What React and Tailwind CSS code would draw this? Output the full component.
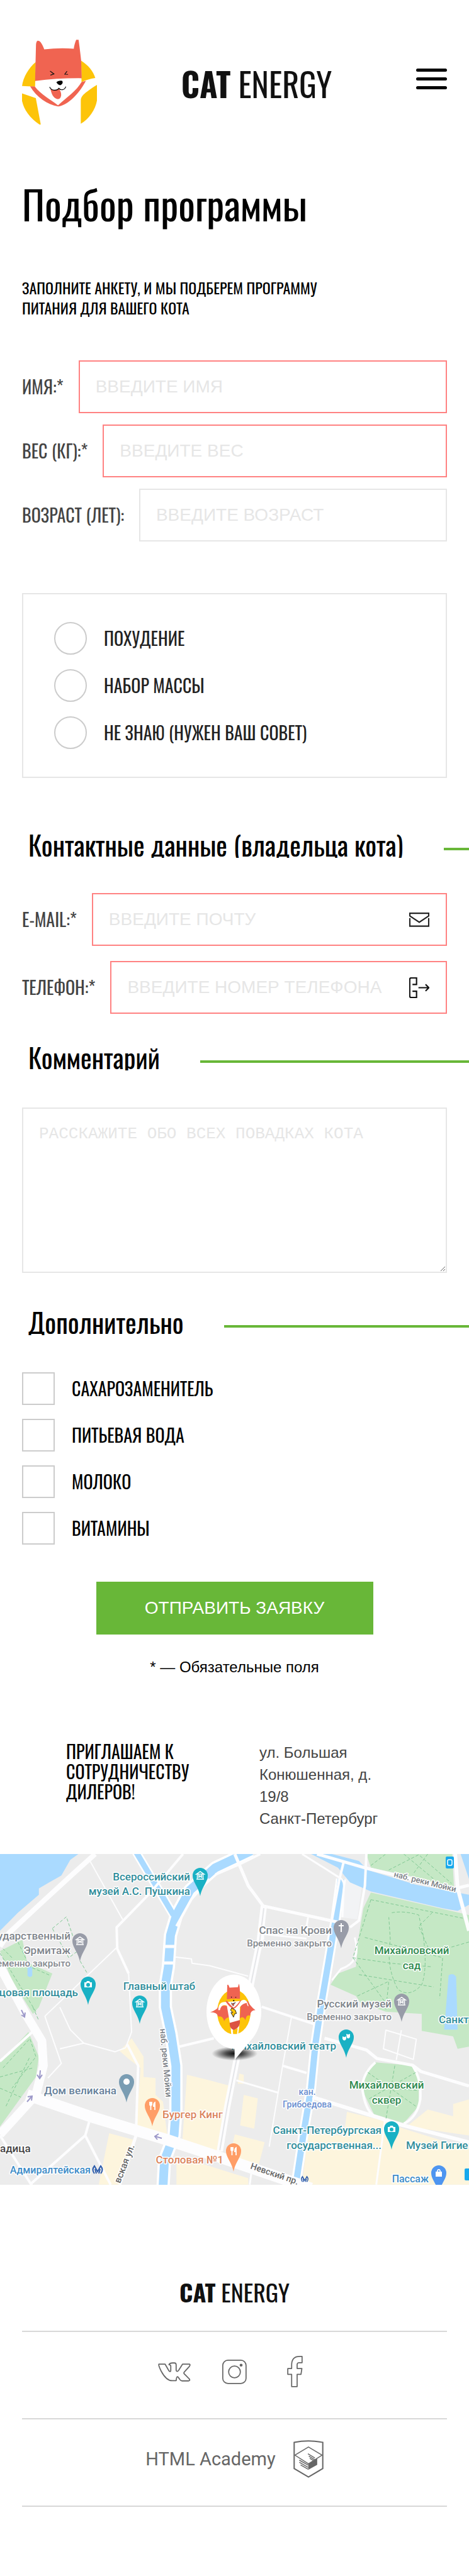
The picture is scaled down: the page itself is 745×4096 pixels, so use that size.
const OSWALD = "font-['Oswald','Roboto_Condensed',sans-serif]";
const ARIAL = "font-['Liberation_Sans',Arial,sans-serif]";

function CatLogo() {
  return (
    <svg viewBox="66 66 408 462" className="h-[135px] w-[119px] shrink-0" aria-label="Кот" role="img">
      <g fill="#fdc409">
        <path d="M141 187C102 220 72 270 66 318L137 322Z" />
        <path d="M388 180C425 203 455 238 465 275Q425 280 390 298Z" />
        <path d="M66 359L141 384L168 528H161C108 495 76 446 66 400Z" />
        <path d="M474 312V398C466 446 430 500 386 524V396C386 378 400 363 420 349C440 333 460 320 474 312Z" />
      </g>
      <path
        fill="#f06451"
        d="M137 291L142 95C144 66 155 68 167 79C177 92 183 108 187 119Q265 109 348 115C350 95 357 75 361 66H374C380 110 385 150 388 180L391 276Q260 275 137 291Z"
      />
      <path fill="#f06451" d="M110 320L135 321C170 365 225 395 262 424C310 380 362 345 390 297L414 290C365 380 305 425 262 430C205 420 145 380 110 320Z" />
      <path fill="#f06451" d="M221 334Q245 350 267 333C277 348 280 358 279 370C275 392 262 391 255 389C235 381 226 362 221 334Z" />
      <path d="M253 299Q262 288 284 290C292 299 284 312 272 314Q258 309 253 299Z" />
      <path fill="none" stroke="#000" strokeWidth="4" strokeLinecap="round" d="M217 325C226 344 256 347 267 331C275 344 298 341 304 323" />
      <path fill="none" stroke="#111" strokeWidth="4" strokeLinecap="round" d="M220 238L240 253L222 259M310 239L299 254L315 255" />
    </svg>
  );
}

function Brand({ size }) {
  return (
    <a href="#" className={`${OSWALD} whitespace-nowrap text-[#111] ${size}`}>
      <b className="font-bold">CAT</b> <span className="font-normal">ENERGY</span>
    </a>
  );
}

function MailIcon() {
  return (
    <svg viewBox="0 0 36 26" className="h-[23px] w-[32px]" fill="none" stroke="#222" strokeWidth="2.5">
      <path d="M1 10V24.5H35V10M1 6V1.2H35V6L18 17.5Z" />
    </svg>
  );
}

function PhoneIcon() {
  return (
    <svg viewBox="0 0 37 38" className="h-[33px] w-[32px]" fill="none" stroke="#111" strokeWidth="2.5">
      <path d="M6 13H13.5V1H3.5Q1 1 1 4V34Q1 37 3.5 37H13.5V25.500H6" />
      <path d="M17 19H35M30 13L36 19L30 25" />
    </svg>
  );
}

function Field({ id, label, placeholder, required, type = "text", icon }) {
  return (
    <div className="flex items-center gap-[24px]">
      <label htmlFor={id} className={`${OSWALD} shrink-0 text-[28px] leading-[40px] font-normal text-[#444]`}>
        {label}
      </label>
      <div className="relative min-w-0 flex-1">
        <input
          id={id}
          type={type}
          placeholder={placeholder}
          className={`${ARIAL} block h-[84px] w-full border-2 bg-white px-[25px] text-[28px] text-[#222] outline-none placeholder:text-[#e6e6e6] placeholder:opacity-100 ${
            required ? "border-[#ff8282]" : "border-[#e6e6e6]"
          }`}
        />
        {icon && <span className="pointer-events-none absolute inset-y-0 right-[28px] flex items-center">{icon}</span>}
      </div>
    </div>
  );
}

function SectionTitle({ children, className }) {
  return (
    <div className={`flex gap-[64px] overflow-hidden pl-[45px] ${className}`}>
      <h2 className={`${OSWALD} h-[42px] shrink-0 overflow-hidden text-[42px] leading-[42px] font-normal text-black`}>{children}</h2>
      <span className="mt-[26px] h-[4px] flex-1 bg-[#68b738]" />
    </div>
  );
}

const water = "#aadaff";

const roads = [
  [8, "M318 59L250 140L150 262L30 410L0 470"],
  [14, "M0 560L90 780L140 890L145 1000L120 1130L0 1305"],
  [18, "M90 1130L300 1225L560 1330L720 1400L1040 1545"],
  [5, "M785 59L830 200L880 290L1130 362"],
  [4, "M1225 59L1220 200L1200 355L1170 385"],
  [3, "M1010 59L1130 160Q1150 170 1150 200L1145 340"],
  [4, "M1150 90L1135 170L1110 350"],
  [2, "M300 88L410 350"],
  [4, "M612 59L500 235L390 385L392 480L430 590"],
  [2, "M430 590L440 850L420 920L385 938L280 900L235 840L200 740M280 900L200 925M150 780L205 990L160 1055"],
  [2, "M390 475L150 780"],
  [4, "M600 915L715 878"],
  [4, "M875 738L970 780L1050 815"],
  [2, "M975 780L945 1000L900 1360"],
  [4, "M945 1000L1025 1032"],
  [5, "M1085 878L1225 930L1260 968L1380 998L1408 1026L1568 1090"],
  [6, "M1045 1140L1235 1218L1340 1262L1568 1340"],
  [6, "M1522 59L1530 210L1568 400"],
  [5, "M1060 59L1225 122L1515 215L1568 198"],
  [4, "M0 980L112 845"],
  [4, "M0 1310L110 1540M100 1529L285 1310L298 1250M285 1310L370 1529"],
  [5, "M455 1310L400 1529"],
  [4, "M425 905L462 1000L455 1285"],
  [2, "M585 517L640 525L642 545L700 555L830 602"],
  [3, "M1287 1240L1258 1529"],
  [3, "M790 1065L930 1120"],
  [3, "M840 1480L835 1529"],
  [2, "M1290 842L1392 882L1382 972L1282 925ZM1342 842L1325 975"],
  [3, "M1186 430Q1210 540 1140 570L1110 620"],
  [3, "M880 390L880 440M1030 340L1020 420M880 415L1025 435"],
  [4, "M720 150L800 105L870 59"],
  [4, "M700 170L640 260L590 380"],
  [4, "M1255 985Q1200 1050 1215 1130Q1225 1200 1250 1222M1380 1000Q1410 1060 1405 1150Q1395 1230 1350 1258"],
];

const paths = [
  "M1240 262L1550 345M1240 262L1180 520L1310 545L1440 560M1310 320Q1350 310 1400 330L1415 420Q1430 570 1410 640Q1370 700 1330 660Q1290 560 1305 440L1300 340M1220 430L1480 520L1470 700M1200 595L1450 650M1195 690L1300 625L1290 750M1568 450L1440 500L1400 380L1445 320M1180 520L1300 740",
  "M1240 110L1290 59M1300 130L1400 62L1510 190M1350 59L1450 170M1430 59L1380 150",
  "M60 450L100 560L170 600M0 500L120 760M40 520L10 480M175 390L222 338L260 490L230 520Z",
  "M10 1010L100 880L120 960L40 1100M0 1050L110 1010M20 1180L100 960M0 1100L70 1140",
  "M1230 1030L1390 1180M1320 1000L1290 1240M1390 1030L1230 1150M1215 1090L1400 1110",
  "M268 535L292 590M110 740L130 800",
];

const labels = [
  ["Всероссийский", 302, 42, "end", "teal"],
  ["музей А.С. Пушкина", 302, 65, "end", "teal"],
  ["ударственный", 112, 136, "end", "grey"],
  ["Эрмитаж", 112, 159, "end", "grey"],
  ["ременно закрыто", 112, 179, "end", "small"],
  ["цовая площадь", 124, 226, "end", "teal"],
  ["Главный штаб", 253, 216, "middle", "teal"],
  ["Дом великана", 185, 382, "end", "slate"],
  ["Бургер Кинг", 258, 420, "start", "orange"],
  ["Столовая №1", 355, 492, "end", "orange"],
  ["адица", 0, 474, "start", "dark"],
  ["Адмиралтейская", 144, 508, "end", "blue"],
  ["Спас на Крови", 527, 127, "end", "grey"],
  ["Временно закрыто", 527, 147, "end", "small"],
  ["Михайловский", 654, 159, "middle", "green"],
  ["сад", 654, 183, "middle", "green"],
  ["Русский музей", 622, 244, "end", "grey"],
  ["Временно закрыто", 622, 264, "end", "small"],
  ["Санкт", 697, 269, "start", "teal"],
  ["Михайловский театр", 534, 311, "end", "teal"],
  ["кан.", 488, 383, "middle", "canal"],
  ["Грибоедова", 488, 403, "middle", "canal"],
  ["Михайловский", 614, 373, "middle", "green"],
  ["сквер", 614, 397, "middle", "green"],
  ["Санкт-Петербургская", 606, 445, "end", "teal"],
  ["государственная...", 606, 469, "end", "teal"],
  ["Музей Гигие", 645, 469, "start", "teal"],
  ["Пассаж", 681, 522, "end", "blue"],
];

const tones = {
  teal: "fill-[#2f8d9b] text-[17px]",
  grey: "fill-[#7f858c] text-[17px]",
  small: "fill-[#85898f] text-[15px]",
  slate: "fill-[#66809a] text-[17px]",
  orange: "fill-[#db845c] text-[17px]",
  dark: "fill-[#444] text-[17px]",
  blue: "fill-[#3c8cc8] text-[16px]",
  green: "fill-[#2f8a4f] text-[17px]",
  canal: "fill-[#6a8fd0] text-[14px]",
};

const pins = [
  [318, 22, "#19b1c4", "museum"],
  [127, 126, "#989ca8", "museum"],
  [140, 195, "#19b1c4", "camera"],
  [222, 225, "#19b1c4", "museum"],
  [201, 350, "#7a9db3", "dot"],
  [242, 388, "#ff9e67", "food"],
  [371, 460, "#ff9e67", "food"],
  [542, 105, "#989ca8", "cross"],
  [638, 222, "#989ca8", "museum"],
  [550, 279, "#19b1c4", "mask"],
  [622, 425, "#19b1c4", "camera"],
  [697, 495, "#4e95f0", "bag"],
];

const glyphs = {
  museum: <path fill="none" stroke="#fff" strokeWidth="1.5" d="M-6 -2L0 -6L6 -2ZM-4.500 -1V5M4.500 -1V5M-6 6H6M-2 4V0L0 2L2 0V4" />,
  camera: <path fill="#fff" fillRule="evenodd" d="M-6 -3H-3L-2 -5H2L3 -3H6V5H-6ZM0 -2A3 3 0 1 0 0 4A3 3 0 1 0 0 -2Z" />,
  dot: <circle r="5" fill="#fff" />,
  food: <path fill="none" stroke="#fff" strokeWidth="1.8" d="M-4 -6V-2Q-4 0 -2.500 0Q-1 0 -1 -2V-6M-2.500 -6V7M4 7V-5Q2 -4 2 1H4" />,
  cross: <path stroke="#fff" strokeWidth="2" d="M0 -7V7M-4 -3H4" />,
  mask: <path fill="#fff" d="M0 -5L3 -4L6 -5V0Q4 4 1 1ZM-6 -1L-3 0L0 -1V3Q-3 8 -6 3Z" />,
  bag: <path fill="#fff" fillRule="evenodd" d="M-5 -2H-3Q-3 -6 0 -6Q3 -6 3 -2H5V6H-5ZM-1.500 -2H1.500Q1.500 -4.500 0 -4.500Q-1.500 -4.500 -1.500 -2Z" />,
};

function MetroMark({ x, y, r }) {
  return (
    <g transform={`translate(${x} ${y}) scale(${r})`} fill="none" stroke="#2d5cab" strokeWidth="2">
      <path d="M-5 6Q-10 0 -5 -6L0 3L5 -6Q10 0 5 6" />
      <path d="M-2 6L-4 -1M2 6L4 -1" />
    </g>
  );
}

function MapMarker() {
  return (
    <g transform="translate(297.9 171.8) scale(.2921)">
      <ellipse cx="256" cy="498" rx="125" ry="38" fill="url(#shade)" />
      <path fill="#fff" d="M252 68C335 68 401 158 401 270C401 335 378 390 343 428L256 533V472C170 472 103 382 103 270C103 158 170 68 252 68Z" />
      <ellipse cx="252" cy="272" rx="91" ry="121" fill="#fdc409" />
      <path fill="#fff" d="M232 330L238 395H275L283 335Z" />
      <path fill="#ef6351" d="M123 273Q160 262 172 238L215 238L228 300Q208 300 199 322Q192 290 168 297Q160 272 123 273Z" />
      <path fill="#ef6351" d="M369 262Q340 240 328 212L290 228L284 308Q300 290 315 316Q320 282 340 292Q342 262 369 262Z" />
      <path fill="#fff" d="M167 262Q168 215 205 217L290 212Q320 190 332 240Q325 242 322 222Q300 225 285 245L283 320L230 332L214 238Q185 225 176 262Z" />
      <path fill="#ef6351" d="M214 203L216 125Q222 118 228 139L274 137L279 118Q284 125 285 165V200Q250 197 214 203Z" />
      <path fill="#ef6351" d="M206 212L214 210Q235 235 251 248Q270 235 288 207L292 209Q272 245 251 256Q225 245 206 212Z" />
      <path fill="#dc5342" d="M229 331L284 316Q290 355 252 371Q228 362 229 331Z" />
      <path fill="#fdc409" d="M246 372L273 360L269 392H248Z" />
      <path fill="#fdc409" stroke="#111" strokeWidth="3" d="M240 250L260 262L266 280L256 282L250 300L236 275H246L234 262Z" />
      <path d="M246 207H256L251 215ZM236 188L243 191L237 194ZM264 189L258 193L265 194Z" />
      <path fill="#ef6351" stroke="#111" strokeWidth="2" d="M237 222Q243 230 250 224Q257 229 261 220L252 224Q254 238 248 238Q242 236 240 225Z" />
    </g>
  );
}

function CityMap() {
  return (
    <svg viewBox="0 0 745 526" preserveAspectRatio="xMidYMid slice" className="block h-[526px] w-full font-['Roboto',sans-serif]" role="img" aria-label="Карта">
      <defs>
        <radialGradient id="shade">
          <stop offset="0" stopColor="#000" stopOpacity=".95" />
          <stop offset=".4" stopColor="#000" stopOpacity=".65" />
          <stop offset="1" stopColor="#000" stopOpacity="0" />
        </radialGradient>
      </defs>
      <rect width="745" height="526" fill="#ececec" />
      <g transform="scale(.4751 .3577) translate(0 -59)">
        <g fill="#fdf5dd">
          <path d="M400 935L440 878L480 960L480 1050L520 1055L520 1130L545 1160L560 1315L455 1285L470 1010L430 970Z" />
          <path d="M625 1040L700 1065L770 1090L740 1390L610 1330Z" />
          <path d="M365 1300L450 1330L400 1529H330Z" />
          <path d="M800 1035L815 1040V1080H795ZM815 1130L862 1145L850 1280L803 1265ZM785 1305L885 1340L865 1440L770 1400Z" />
          <path d="M1160 1205L1270 1240L1350 1280L1568 1370V1529H1010L1030 1300L1150 1310Z" />
          <path d="M1430 1195L1515 1225V1170L1568 1150V1310L1360 1270Z" />
          <path d="M590 1400L830 1500V1529H590Z" />
        </g>
        <g fill="#c5e8c5">
          <path d="M1225 59H1512L1518 210L1400 165L1240 120Z" />
          <path d="M1240 230L1568 330V915L1530 925L1515 870L1410 845V770L1290 760L1205 720L1190 690L1105 640L1130 590L1190 560L1200 420L1215 300Z" />
          <path d="M0 490L75 440L90 540L175 590L130 740L110 770L40 620Z" />
          <path d="M0 985L95 850L130 960L120 1050L60 1160L0 1270Z" />
          <path d="M1255 985L1380 1000L1400 1040V1180L1350 1255L1250 1215L1212 1110L1225 1020Z" />
        </g>
        <g fill="#f2f3f5">
          <path d="M1155 160L1210 200L1195 350L1140 340Z" />
        </g>
        <g fill={water}>
          <path d="M0 59H262L235 85L205 155L165 185L130 212V240L60 320L0 400Z" />
          <path d="M1500 598Q1515 585 1525 605L1530 840H1485Z" />
          <path d="M1540 59H1568V170Z" />
          <path d="M1040 59H1110L1200 90L1230 130L1390 195L1568 240V285L1530 312L1480 300L1240 225L1170 185L1130 120Z" />
          <path d="M92 560Q100 552 108 565V600Q100 612 92 600Z" />
        </g>
        <g fill="none" stroke="#fff" strokeLinejoin="round">
          <path vectorEffect="non-scaling-stroke" strokeWidth="14" d="M455 50L580 330" />
          <path vectorEffect="non-scaling-stroke" strokeWidth="21" d="M840 45L720 120L635 220L590 330L570 420L563 560L553 640V740L572 860L588 1000V1200L582 1310L550 1420L545 1540" />
          <path vectorEffect="non-scaling-stroke" strokeWidth="16" d="M1140 170L1122 350L1098 540L1075 720L1055 900L1040 1100L1015 1300L988 1540" />
        </g>
        <g fill="none" stroke={water} strokeLinejoin="round">
          <path vectorEffect="non-scaling-stroke" strokeWidth="9" d="M455 50L580 330" />
          <path vectorEffect="non-scaling-stroke" strokeWidth="14" d="M840 45L720 120L635 220L590 330L570 420L563 560L553 640V740L572 860L588 1000V1200L582 1310L550 1420L545 1540" />
          <path vectorEffect="non-scaling-stroke" strokeWidth="10" d="M1140 170L1122 350L1098 540L1075 720L1055 900L1040 1100L1015 1300L988 1540" />
        </g>
        <g fill="none" stroke="#fdfdfe" strokeLinejoin="round">
          {roads.map(([w, d]) => (
            <path key={d} d={d} strokeWidth={w} vectorEffect="non-scaling-stroke" />
          ))}
          <path vectorEffect="non-scaling-stroke" strokeWidth="10" d="M882 290L868 450L843 610L790 980L760 1180L735 1380" />
          <path vectorEffect="non-scaling-stroke" strokeWidth="5" d="M550 470H585M545 543H585" />
        </g>
        <path vectorEffect="non-scaling-stroke" fill="none" stroke="#e4e5e8" strokeWidth="2" d="M882 300L868 450L843 610L790 980L760 1180L735 1375" />
        <g fill="none" stroke="#7fc893" strokeDasharray="5 3">
          {paths.map((d) => (
            <path key={d} d={d} strokeWidth="1" vectorEffect="non-scaling-stroke" />
          ))}
        </g>
      </g>
      <g fill="none" stroke="#9d99c9" strokeWidth="2">
        <path d="M34 248L39 258M34 256L39 259L40 252" />
        <path d="M64 344L63 356M59 351L63 357L67 351" />
        <path d="M43 394L50 386M44 386L51 385L50 392" />
        <path d="M257 452L247 449M252 445L246 449L250 454" />
      </g>
      <g className="font-medium" stroke="#fff" strokeWidth="3" strokeLinejoin="round" paintOrder="stroke">
        {labels.map(([text, x, y, anchor, tone]) => (
          <text key={`${text}${y}`} x={x} y={y} textAnchor={anchor} className={tones[tone]}>
            {text}
          </text>
        ))}
        <text transform="translate(625 36) rotate(14)" className="fill-[#7d8288] text-[13px]">наб. реки Мойки</text>
        <text transform="translate(254 278) rotate(85)" className="fill-[#7d8288] text-[14px]">наб. реки Мойки</text>
        <text transform="translate(397 500) rotate(19)" className="fill-[#666] text-[14px]">Невский пр.</text>
        <text transform="translate(214 464) rotate(-69)" textAnchor="end" className="fill-[#666] text-[15px]">вская ул.</text>
      </g>
      {pins.map(([x, y, color, kind]) => (
        <g key={`${x}-${y}`} transform={`translate(${x} ${y + 12})`}>
          <path fill={color} d="M0 -12A12 12 0 0 1 12 0C12 11 3 17 0 33C-3 17 -12 11 -12 0A12 12 0 0 1 0 -12Z" />
          {glyphs[kind]}
        </g>
      ))}
      <MetroMark x={155} y={502} r={1} />
      <MetroMark x={484} y={517} r={0.7} />
      <g>
        <rect x="708" y="4" width="13" height="19" rx="2" fill="#16a8ec" />
        <rect x="711" y="9" width="7" height="9" rx="2" fill="none" stroke="#fff" strokeWidth="1.500" />
        <rect x="738" y="500" width="13" height="19" rx="2" fill="#16a8ec" />
      </g>
      <MapMarker />
    </svg>
  );
}

const social = { fill: "none", stroke: "#666", strokeWidth: 6, strokeLinejoin: "round" };

const goals = ["Похудение", "Набор массы", "Не знаю (нужен ваш совет)"];
const extras = ["Сахарозаменитель", "Питьевая вода", "Молоко", "Витамины"];

export default function App() {
  return (
    <div className="min-h-screen bg-white text-black">
      <header className="flex items-center justify-between px-[35px] pt-[63px]">
        <CatLogo />
        <div className="pt-[4px]">
          <Brand size="text-[52px] leading-[60px]" />
        </div>
        <button type="button" aria-label="Меню" className="mb-[10px] flex w-[49px] flex-col gap-[9px]">
          <span className="h-[5px] w-full rounded-full bg-black" />
          <span className="h-[5px] w-full rounded-full bg-black" />
          <span className="h-[5px] w-full rounded-full bg-black" />
        </button>
      </header>

      <main>
        <h1 className={`${OSWALD} mt-[90px] px-[35px] text-[63px] leading-[72px] font-normal`}>Подбор программы</h1>
        <p className={`${OSWALD} mt-[81px] max-w-[560px] px-[35px] text-[24px] leading-[32px] uppercase`}>
          Заполните анкету, и мы подберем программу питания для вашего кота
        </p>

        <form>
          <div className="mt-[68px] flex flex-col gap-[18px] px-[35px]">
            <Field id="name" label="ИМЯ:*" placeholder="ВВЕДИТЕ ИМЯ" required />
            <Field id="weight" label="ВЕС (КГ):*" placeholder="ВВЕДИТЕ ВЕС" required />
            <Field id="age" label="ВОЗРАСТ (ЛЕТ):" placeholder="ВВЕДИТЕ ВОЗРАСТ" />
          </div>

          <fieldset className="mx-[35px] mt-[82px] flex flex-col gap-[23px] border-2 border-[#e6e6e6] py-[44px] pl-[49px]">
            {goals.map((goal, i) => (
              <div key={goal} className="flex items-center gap-[27px]">
                <input
                  id={`goal-${i}`}
                  type="radio"
                  name="goal"
                  className="size-[52px] shrink-0 appearance-none rounded-full border-2 border-[#ccc] bg-white checked:bg-[#68b738]"
                />
                <label htmlFor={`goal-${i}`} className={`${OSWALD} text-[28px] leading-[40px] text-[#222] uppercase`}>
                  {goal}
                </label>
              </div>
            ))}
          </fieldset>

          <SectionTitle className="mt-[85px]">Контактные данные (владельца кота)</SectionTitle>
          <div className="mt-[56px] flex flex-col gap-[24px] px-[35px]">
            <Field id="email" type="email" label="E-MAIL:*" placeholder="ВВЕДИТЕ ПОЧТУ" required icon={<MailIcon />} />
            <Field id="phone" type="tel" label="ТЕЛЕФОН:*" placeholder="ВВЕДИТЕ НОМЕР ТЕЛЕФОНА" required icon={<PhoneIcon />} />
          </div>

          <SectionTitle className="mt-[48px]">Комментарий</SectionTitle>
          <div className="mt-[59px] px-[35px]">
            <textarea
              aria-label="Комментарий"
              placeholder="РАССКАЖИТЕ ОБО ВСЕХ ПОВАДКАХ КОТА"
              className="block h-[263px] w-full border-2 border-[#e6e6e6] bg-white px-[25px] py-[24px] font-['Liberation_Mono',monospace] text-[26px] leading-[32px] text-[#222] outline-none placeholder:text-[#e6e6e6] placeholder:opacity-100"
            />
          </div>

          <SectionTitle className="mt-[57px]">Дополнительно</SectionTitle>
          <div className="mt-[59px] flex flex-col gap-[22px] px-[35px]">
            {extras.map((extra, i) => (
              <div key={extra} className="flex items-center gap-[27px]">
                <input
                  id={`extra-${i}`}
                  type="checkbox"
                  className="size-[52px] shrink-0 appearance-none border-2 border-[#ccc] bg-white checked:bg-[#68b738]"
                />
                <label htmlFor={`extra-${i}`} className={`${OSWALD} text-[28px] leading-[40px] uppercase`}>
                  {extra}
                </label>
              </div>
            ))}
          </div>

          <div className={`${ARIAL} mt-[59px] flex flex-col items-center`}>
            <button type="submit" className="h-[84px] w-[440px] bg-[#68b738] text-[28px] text-white uppercase">
              Отправить заявку
            </button>
            <p className="mt-[36px] text-[24px] leading-[32px]">* — Обязательные поля</p>
          </div>
        </form>

        <section className="mt-[102px] flex pl-[105px]">
          <h2 className={`${OSWALD} w-[307px] pr-[90px] text-[28px] leading-[32px] font-normal uppercase`}>Приглашаем к сотрудничеству дилеров!</h2>
          <address className={`${ARIAL} max-w-[200px] text-[24px] leading-[35px] text-[#444] not-italic`}>
            ул. Большая Конюшенная, д. 19/8
            <br />
            Санкт-Петербург
          </address>
        </section>

        <div className="mt-[39px]">
          <CityMap />
        </div>
      </main>

      <footer className="px-[35px] pt-[148px] pb-[110px]">
        <div className="flex justify-center border-b-2 border-[#d8d8d8] pb-[40px]">
          <Brand size="text-[38px] leading-[44px]" />
        </div>
        <nav className="flex h-[139px] items-center justify-center border-b-2 border-[#d8d8d8] pb-[11px]">
          <a href="#vk" aria-label="ВКонтакте" className="flex w-[96px] justify-center">
            <svg viewBox="114 84 177 105" className="h-[31px] w-[52px]" {...social}>
              <path d="M119 94H152L172 129Q182 140 183 129V104Q182 98 173 97Q178 88 192 88H203Q212 88 212 98V128Q216 140 226 127L247 94H284Q290 96 284 106L257 136Q250 143 258 149L283 174Q289 184 280 185H244Q238 185 234 180L223 165Q217 158 214 170L212 184H190C165 184 145 158 132 134C123 117 115 96 119 94Z" />
            </svg>
          </a>
          <a href="#instagram" aria-label="Instagram" className="flex w-[96px] justify-center">
            <svg viewBox="464 62 134 134" className="size-[39px]" {...social}>
              <rect x="467" y="65" width="127" height="127" rx="28" />
              <circle cx="531" cy="129" r="32" />
              <circle cx="567" cy="92" r="8" fill="#666" stroke="none" />
            </svg>
          </a>
          <a href="#facebook" aria-label="Facebook" className="flex w-[96px] justify-center">
            <svg viewBox="812 42 86 172" className="h-[50px] w-[25px]" {...social}>
              <path d="M894 45V79H876Q867 80 867 90V111H893L888 143H867V210H837V143H816V111H837V90Q838 45 880 45Z" />
            </svg>
          </a>
        </nav>
        <div className="flex h-[139px] items-center justify-center border-b-2 border-[#d8d8d8] pb-[11px]">
          <a href="#academy" className="flex items-center gap-[28px] font-['Roboto',sans-serif] text-[29px] leading-[36px] font-normal text-[#666]">
            HTML Academy
            <svg viewBox="851 503 164 206" className="h-[60px] w-[48px]" fill="none" stroke="#666" strokeWidth="5">
              <path strokeWidth="7" d="M855 515Q933 500 1011 515V658L933 704L855 658Z" />
              <path d="M933 540L1007 585L933 632L859 585Z" />
              <path fill="#666" d="M935 634L978 608V636L935 660Z" />
              <path d="M883 612L932 640M883 624L932 652M890 638L932 662M930 577L968 600M935 590L966 609M940 602L960 614" />
            </svg>
          </a>
        </div>
      </footer>
    </div>
  );
}
